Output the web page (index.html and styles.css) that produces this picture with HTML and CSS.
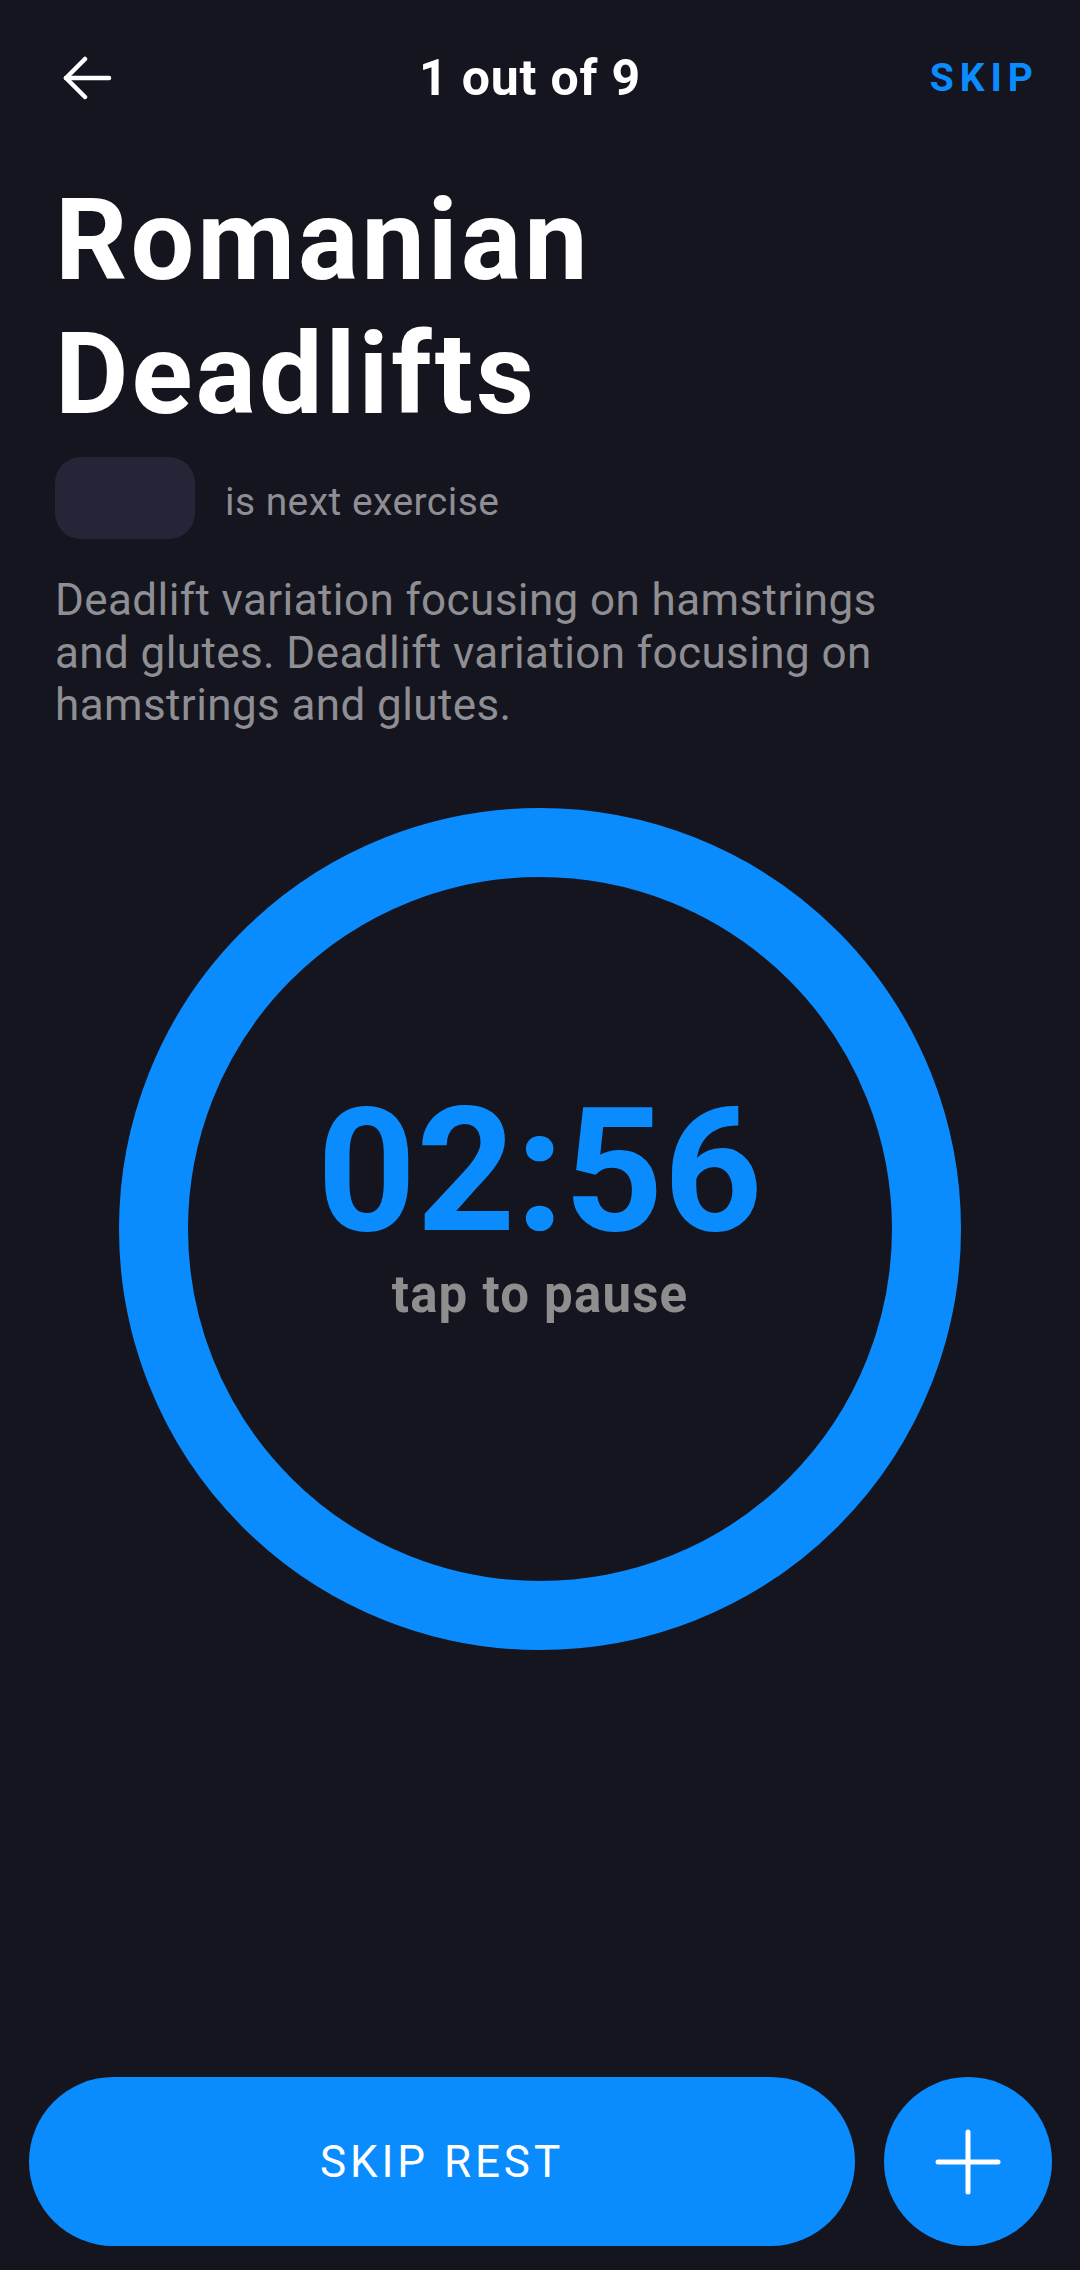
FILE: index.html
```html
<!DOCTYPE html>
<html lang="en">
<head>
<meta charset="utf-8">
<title>Romanian Deadlifts</title>
<link rel="stylesheet" href="styles.css">
</head>
<body>
<div class="screen">
  <header class="topbar">
    <button class="back" aria-label="Back">
      <svg width="52" height="44" viewBox="0 0 52 44" fill="none" stroke="#ffffff" stroke-width="4.5" stroke-linecap="round" stroke-linejoin="round">
        <path d="M25 3 L6 22 L25 41"/>
        <path d="M6 22 H49"/>
      </svg>
    </button>
    <div class="counter">1 out of 9</div>
    <div class="skip">SKIP</div>
  </header>

  <main class="content">
    <h1 class="title">Romanian<br>Deadlifts</h1>
    <div class="next-row">
      <div class="next-pill"></div>
      <span class="next-label">is next exercise</span>
    </div>
    <p class="description">Deadlift variation focusing on hamstrings and glutes. Deadlift variation focusing on hamstrings and glutes.</p>

    <div class="timer-wrap">
      <div class="ring">
        <div class="time">02:56</div>
        <div class="hint">tap to pause</div>
      </div>
    </div>
  </main>

  <footer class="actions">
    <button class="skip-rest">SKIP REST</button>
    <button class="add" aria-label="Add time">
      <svg width="66" height="66" viewBox="0 0 66 66" fill="none" stroke="#ffffff" stroke-width="5" stroke-linecap="round">
        <path d="M33 3 V63"/>
        <path d="M3 33 H63"/>
      </svg>
    </button>
  </footer>
</div>
</body>
</html>
```

FILE: styles.css
```css
* {
  box-sizing: border-box;
}

html, body {
  margin: 0;
  padding: 0;
  background: #15151f;
}

body {
  font-family: Roboto, "Noto Sans", "Liberation Sans", sans-serif;
  color: #ffffff;
}

.screen {
  width: 1080px;
  height: 2270px;
  display: flex;
  flex-direction: column;
  background: #15151f;
}

.topbar {
  height: 155px;
  display: grid;
  grid-template-columns: 1fr auto 1fr;
  align-items: center;
  padding: 0 41px 0 21px;
}

.back {
  justify-self: start;
  background: none;
  border: 0;
  padding: 0 0 0 39px;
  display: flex;
  cursor: pointer;
}

.counter {
  font-size: 50px;
  font-weight: 700;
  color: #ffffff;
  letter-spacing: 0.8px;
}

.skip {
  justify-self: end;
  font-size: 39px;
  font-weight: 700;
  color: #0a8cff;
  letter-spacing: 6px;
}

.content {
  padding: 0 55px;
  display: flex;
  flex-direction: column;
}

.title {
  margin: 19px 0 0 0;
  font-size: 113px;
  line-height: 134px;
  font-weight: 700;
  color: #ffffff;
  letter-spacing: 3px;
}

.next-row {
  margin-top: 15px;
  display: flex;
  align-items: center;
  gap: 30px;
}

.next-pill {
  width: 140px;
  height: 82px;
  border-radius: 26px;
  background: #262537;
}

.next-label {
  font-size: 39px;
  color: #8e8e93;
  padding-top: 8px;
  letter-spacing: 0.45px;
}

.description {
  margin: 35px 0 0 0;
  width: 890px;
  font-size: 44px;
  line-height: 52.5px;
  color: #8e8e93;
  letter-spacing: 0.4px;
}

.timer-wrap {
  margin-top: 76px;
  display: flex;
  justify-content: center;
}

.ring {
  width: 842px;
  height: 842px;
  border-radius: 50%;
  border: 69px solid #0a8cff;
  display: flex;
  flex-direction: column;
  align-items: center;
  justify-content: center;
  padding-bottom: 42px;
}

.time {
  font-size: 173px;
  line-height: 150px;
  font-weight: 700;
  color: #0a8cff;
}

.hint {
  margin-top: 24px;
  font-size: 51px;
  line-height: 50px;
  font-weight: 700;
  color: #8e8e8e;
  letter-spacing: 1.2px;
}

.actions {
  margin-top: auto;
  padding: 0 28px 24px 29px;
  display: flex;
  gap: 29px;
}

.skip-rest {
  flex: 1;
  height: 169px;
  border: 0;
  border-radius: 85px;
  background: #0a8cff;
  color: #ffffff;
  font-family: Roboto, "Noto Sans", "Liberation Sans", sans-serif;
  font-size: 44px;
  font-weight: 400;
  letter-spacing: 0.0893em;
  padding: 0;
}

.add {
  width: 168px;
  height: 169px;
  border: 0;
  border-radius: 50%;
  background: #0a8cff;
  display: flex;
  align-items: center;
  justify-content: center;
  padding: 0;
}
```
